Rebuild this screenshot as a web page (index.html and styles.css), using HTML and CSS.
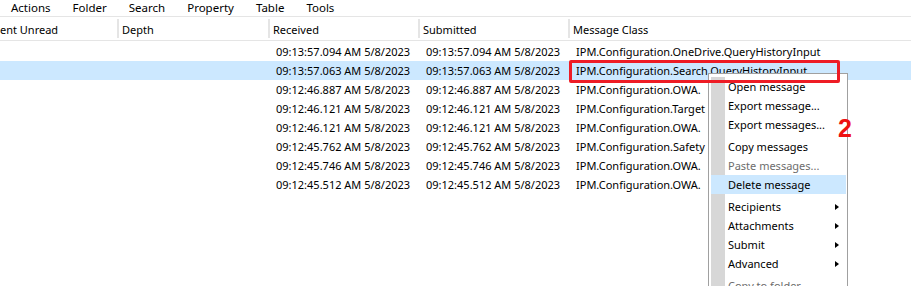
FILE: index.html
```html
<!DOCTYPE html>
<html>
<head>
  <title>Messages</title>
  <link rel="stylesheet" href="styles.css">
</head>
<body>
  <div class="menubar">
    <span>Actions</span>
    <span>Folder</span>
    <span>Search</span>
    <span>Property</span>
    <span>Table</span>
    <span>Tools</span>
  </div>

  <div class="table">
    <div class="row head">
      <div class="cell">ent Unread</div>
      <div class="cell">Depth</div>
      <div class="cell">Received</div>
      <div class="cell">Submitted</div>
      <div class="cell">Message Class</div>
    </div>
    <div class="row">
      <div class="cell"></div><div class="cell"></div>
      <div class="cell">09:13:57.094 AM 5/8/2023</div>
      <div class="cell">09:13:57.094 AM 5/8/2023</div>
      <div class="cell">IPM.Configuration.OneDrive.QueryHistoryInput</div>
    </div>
    <div class="row selected">
      <div class="cell"></div><div class="cell"></div>
      <div class="cell">09:13:57.063 AM 5/8/2023</div>
      <div class="cell">09:13:57.063 AM 5/8/2023</div>
      <div class="cell">IPM.Configuration.Search.QueryHistoryInput</div>
    </div>
    <div class="row">
      <div class="cell"></div><div class="cell"></div>
      <div class="cell">09:12:46.887 AM 5/8/2023</div>
      <div class="cell">09:12:46.887 AM 5/8/2023</div>
      <div class="cell">IPM.Configuration.OWA.</div>
    </div>
    <div class="row">
      <div class="cell"></div><div class="cell"></div>
      <div class="cell">09:12:46.121 AM 5/8/2023</div>
      <div class="cell">09:12:46.121 AM 5/8/2023</div>
      <div class="cell">IPM.Configuration.Target</div>
    </div>
    <div class="row">
      <div class="cell"></div><div class="cell"></div>
      <div class="cell">09:12:46.121 AM 5/8/2023</div>
      <div class="cell">09:12:46.121 AM 5/8/2023</div>
      <div class="cell">IPM.Configuration.OWA.</div>
    </div>
    <div class="row">
      <div class="cell"></div><div class="cell"></div>
      <div class="cell">09:12:45.762 AM 5/8/2023</div>
      <div class="cell">09:12:45.762 AM 5/8/2023</div>
      <div class="cell">IPM.Configuration.Safety</div>
    </div>
    <div class="row">
      <div class="cell"></div><div class="cell"></div>
      <div class="cell">09:12:45.746 AM 5/8/2023</div>
      <div class="cell">09:12:45.746 AM 5/8/2023</div>
      <div class="cell">IPM.Configuration.OWA.</div>
    </div>
    <div class="row">
      <div class="cell"></div><div class="cell"></div>
      <div class="cell">09:12:45.512 AM 5/8/2023</div>
      <div class="cell">09:12:45.512 AM 5/8/2023</div>
      <div class="cell">IPM.Configuration.OWA.</div>
    </div>
  </div>

  <!-- context menu over the grid -->
  <div class="context-menu">
    <div class="items">
      <div class="item">Open message</div>
      <div class="item">Export message...</div>
      <div class="item">Export messages...</div>
      <div class="sep"></div>
      <div class="item">Copy messages</div>
      <div class="item disabled">Paste messages...</div>
      <div class="item active">Delete message</div>
      <div class="sep"></div>
      <div class="item sub">Recipients</div>
      <div class="item sub">Attachments</div>
      <div class="item sub">Submit</div>
      <div class="item sub">Advanced</div>
      <div class="sep"></div>
      <div class="item disabled">Copy to folder...</div>
    </div>
  </div>

  <div class="mark-box"></div>
  <div class="step">2</div>
</body>
</html>
```

FILE: styles.css
```css
body {
  margin: 0;
  font-family: "Noto Sans", "Liberation Sans", sans-serif;
  font-size: 11px;
  color: #000;
  background: #fff;
  overflow: hidden;
}
.menubar {
  display: flex;
  height: 16px;
  line-height: 16px;
  font-size: 11.5px;
}
.menubar span {
  padding: 0 11px;
}
.row {
  display: grid;
  grid-template-columns: 117px 151px 150px 150px 1fr;
  height: 19px;
  line-height: 19px;
  white-space: nowrap;
}
.row .cell {
  overflow: hidden;
  padding-left: 8px;
}
.row .cell:first-child {
  padding-left: 0;
}
.head {
  height: 19px;
  padding: 2px 0;
  border-top: 1px solid #e5e5e5;
  border-bottom: 1px solid #e5e5e5;
  margin-bottom: 1px;
}
.head .cell {
  line-height: 22px;
  padding-left: 3px;
  border-left: 2px solid #e5e5e5;
}
.head .cell:first-child {
  border-left: none;
  padding-left: 0;
}
.selected {
  background: #cce8ff;
}
.context-menu {
  position: absolute;
  left: 708px;
  top: 73px;
  width: 140px;
  height: 240px;
  box-sizing: border-box;
  padding: 3px 1px 0 2px;
  background: #fff;
  border: 1px solid #a0a0a0;
}
.items {
  background: linear-gradient(90deg, #d7d7d7 0 14px, transparent 14px);
  height: 100%;
}
.item {
  display: flex;
  justify-content: space-between;
  align-items: center;
  height: 19px;
  padding: 0 7px 0 17px;
  white-space: nowrap;
}
.item.active {
  background: #cce8ff;
}
.item.disabled {
  color: #6d6d6d;
}
.item.sub::after {
  content: "";
  border-style: solid;
  border-color: transparent transparent transparent #000;
  border-width: 3.5px 0 3.5px 4px;
}
.sep {
  height: 3px;
}
.mark-box {
  position: absolute;
  left: 569px;
  top: 60px;
  width: 271px;
  height: 23px;
  box-sizing: border-box;
  border: 3px solid #ee1c25;
  border-radius: 2px;
}
.step {
  position: absolute;
  left: 838px;
  top: 116px;
  font-family: "Liberation Sans", Arial, sans-serif;
  font-weight: bold;
  font-size: 25px;
  line-height: 1;
  color: #ee1111;
}
```
